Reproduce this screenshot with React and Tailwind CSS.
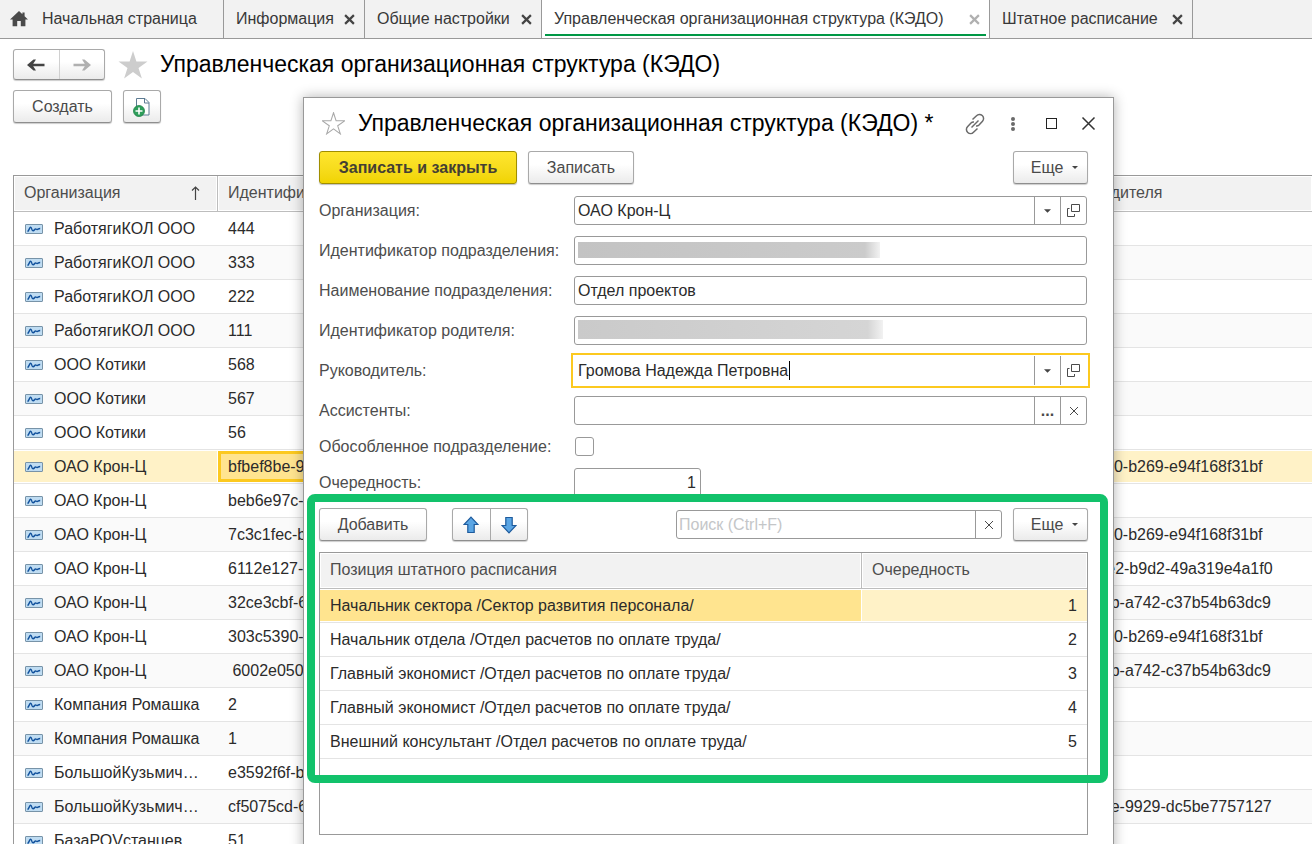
import { useState } from "react";

const TABS = [
    { title: "Информация", width: "w-[141px]" },
    { title: "Общие настройки", width: "w-[177px]" },
    { title: "Управленческая организационная структура (КЭДО)", width: "w-[448px]", active: true },
    { title: "Штатное расписание", width: "w-[203px]" },
];

const DEPARTMENTS = [
    { org: "РаботягиКОЛ ООО", code: "444" },
    { org: "РаботягиКОЛ ООО", code: "333" },
    { org: "РаботягиКОЛ ООО", code: "222" },
    { org: "РаботягиКОЛ ООО", code: "111" },
    { org: "ООО Котики", code: "568" },
    { org: "ООО Котики", code: "567" },
    { org: "ООО Котики", code: "56" },
    { org: "ОАО Крон-Ц", code: "bfbef8be-9", parent: "7e3b2a90-5d1e-11e0-b269-e94f168f31bf", selected: true },
    { org: "ОАО Крон-Ц", code: "beb6e97c-1" },
    { org: "ОАО Крон-Ц", code: "7c3c1fec-b", parent: "7e3b2a90-5d1e-11e0-b269-e94f168f31bf" },
    { org: "ОАО Крон-Ц", code: "6112e127-4", parent: "a0946e12-8b3d-41e2-b9d2-49a319e4a1f0" },
    { org: "ОАО Крон-Ц", code: "32ce3cbf-6", parent: "6002e050-7f1a-4d9b-a742-c37b54b63dc9" },
    { org: "ОАО Крон-Ц", code: "303c5390-2", parent: "7e3b2a90-5d1e-11e0-b269-e94f168f31bf" },
    { org: "ОАО Крон-Ц", code: "\u00a06002e050-7", parent: "6002e050-7f1a-4d9b-a742-c37b54b63dc9" },
    { org: "Компания Ромашка", code: "2" },
    { org: "Компания Ромашка", code: "1" },
    { org: "БольшойКузьмич…", code: "e3592f6f-b" },
    { org: "БольшойКузьмич…", code: "cf5075cd-6", parent: "e3592a6b-b41d-4f8e-9929-dc5be7757127" },
    { org: "БазаРОVстанцев", code: "51" },
];

const POSITIONS = [
    "Начальник сектора /Сектор развития персонала/",
    "Начальник отдела /Отдел расчетов по оплате труда/",
    "Главный экономист /Отдел расчетов по оплате труда/",
    "Главный экономист /Отдел расчетов по оплате труда/",
    "Внешний консультант /Отдел расчетов по оплате труда/",
];

const BUTTON =
    "flex items-center justify-center rounded-[3px] border border-[#a9a9a9] border-b-[#8e8e8e] bg-linear-to-b from-white from-40% to-[#ebebeb] text-[#4a4a4a] shadow-[0_1px_1px_rgba(0,0,0,0.2)]";

/* Icons */

function Cross({ size = 10, width = 2 }) {
    return (
        <svg width={size} height={size} viewBox="0 0 10 10">
            <path d="M1 1 9 9M9 1 1 9" stroke="currentColor" strokeWidth={width} fill="none" />
        </svg>
    );
}

function HomeIcon() {
    return (
        <svg width="18" height="16" viewBox="0 0 18 16" fill="#4a4a4a">
            <path d="M9 0 0 8.6h2.6V15.2h4.6V10h3.6v5.2h4.6V8.6H18L14.6 5.3V1.4h-2.2v1.8z" />
        </svg>
    );
}

function ArrowIcon({ flip, color }) {
    return (
        <svg width="18" height="12" viewBox="0 0 18 12" className={flip ? "rotate-180" : ""}>
            <path d="M0 6 6.5 0.5H9L6.2 4.7H17.5V7.3H6.2L9 11.5H6.5z" fill={color} />
        </svg>
    );
}

function StarIcon({ size, fill, stroke }) {
    return (
        <svg width={size} height={size} viewBox="0 0 30 30">
            <path
                d="M15 1 18.4 11.5H29.5L20.5 18 23.9 28.500 15 22 6.100 28.500 9.500 18 .5 11.500H11.600z"
                fill={fill}
                stroke={stroke}
                strokeWidth="1.4"
            />
        </svg>
    );
}

function NewDocIcon() {
    return (
        <svg width="18" height="20" viewBox="0 0 18 20">
            <path d="M3.5 1.5h8.500l4 4v12.500H3.500z" fill="#fff" stroke="#5d7b92" />
            <path d="M11.5 1.5V6H16" fill="none" stroke="#5d7b92" />
            <circle cx="6" cy="14" r="5.5" fill="#2e9e5b" stroke="#1f8448" strokeWidth="0.8" />
            <path d="M6 10.5v7M2.5 14h7" stroke="#fff" strokeWidth="1.6" />
        </svg>
    );
}

function ItemIcon() {
    return (
        <svg width="18" height="12" viewBox="0 -1.500 18 12" className="shrink-0">
            <rect x="0.5" y="0" width="17" height="9" rx="0.5" fill="#bfdcf2" stroke="#7793a8" />
            <path
                d="M2.5 7C4 6.5 4.500 2.500 5.700 2.700S6.500 6.500 8 6.300 9.500 4.500 10.500 4.500s1 .8 2 .3 1.200-.8 2.700-.8"
                fill="none"
                stroke="#10509c"
                strokeWidth="1.4"
            />
        </svg>
    );
}

function LinkIcon() {
    return (
        <svg width="22" height="22" viewBox="0 0 22 22" fill="none" stroke="#6a6a6a" strokeWidth="1.5">
            <path d="M8.5 6.5 12.5 2.8a3.9 3.9 0 0 1 6 5.5L15 12q-1.200 1.200-3 1" />
            <path d="M13.5 15.5 9.5 19.2a3.9 3.9 0 0 1-6-5.500L7 10q1.200-1.200 3-1" />
            <path d="M7.500 14.500 14.500 7.500" />
        </svg>
    );
}

function MoveIcon({ down }) {
    return (
        <svg width="16" height="18" viewBox="0 0 16 18" className={down ? "rotate-180" : ""}>
            <path d="M8 1.200 15 8.500h-3.800V16.500H4.800V8.500H1z" fill="#5aa5e4" stroke="#1d5a9c" strokeWidth="1.2" />
        </svg>
    );
}

function OpenIcon() {
    return (
        <svg width="13" height="13" viewBox="0 0 13 13" fill="none" stroke="#4a4a4a">
            <path d="M4.5 0.5h8v7h-8zM2.5 4.5h-2v8h7v-2.500" />
        </svg>
    );
}

function Caret({ small }) {
    return (
        <svg width={small ? 6 : 7} height={small ? 3 : 4} viewBox="0 0 8 4" fill="#444">
            <path d="M0 0h8L4 4z" />
        </svg>
    );
}

/* Form */

function Field({ id, label, children }) {
    return (
        <>
            <label htmlFor={id} className="leading-[29px] whitespace-nowrap text-[#4d4d4d]">
                {label}
            </label>
            {children}
        </>
    );
}

function TextBox({ id, value, onChange, focused, actions = [], children }) {
    return (
        <div
            className={`relative mr-px flex h-[29px] bg-white ${
                focused
                    ? "px-px outline-2 outline-offset-1 outline-[#fcc91f]"
                    : "rounded-[3px] border border-[#999]"
            }`}
        >
            <input
                id={id}
                type="text"
                value={value}
                onChange={(e) => onChange && onChange(e.target.value)}
                className="min-w-0 flex-1 bg-transparent px-[3px] text-[#2b2b2b] outline-none"
            />
            {actions.map((a) => (
                <button
                    key={a.label}
                    type="button"
                    aria-label={a.label}
                    className="flex w-[26px] items-center justify-center border-l border-[#999] text-[#4a4a4a]"
                >
                    {a.icon}
                </button>
            ))}
            {children}
        </div>
    );
}

const SELECT_ACTIONS = [
    { label: "Выбрать", icon: <Caret /> },
    { label: "Открыть", icon: <OpenIcon /> },
];

function MoreButton() {
    return (
        <button type="button" className={`${BUTTON} h-[33px] w-[75px] gap-[9px] pl-2`}>
            Еще
            <Caret small />
        </button>
    );
}

function HeaderCell({ children, last }) {
    return (
        <th
            className={`h-9 border-b border-[#bdbdbd] bg-white p-px text-left font-normal text-[#4d4d4d] ${
                last ? "" : "border-r"
            }`}
        >
            <div className="flex h-[33px] items-center justify-between bg-[#f2f2f2] px-[9px] pb-0.5 whitespace-nowrap">
                {children}
            </div>
        </th>
    );
}

function Dialog() {
    const [name, setName] = useState("Отдел проектов");
    const [head, setHead] = useState("Громова Надежда Петровна");
    const [search, setSearch] = useState("");

    return (
        <section
            aria-label="Управленческая организационная структура"
            className="absolute top-[97px] right-[198px] left-[303px] border border-[#999] bg-white pr-[25px] pb-8 pl-[15px] shadow-[0_0_12px_rgba(0,0,0,0.3)]"
        >
            {/* Title */}
            <header className="-mr-2 flex h-[53px] items-center pb-0.5">
                <button type="button" aria-label="В избранное" className="w-[39px] pl-[3px]">
                    <StarIcon size={23} fill="none" stroke="#a8a8a8" />
                </button>
                <h2 className="flex-1 text-[23px] whitespace-nowrap text-black">
                    Управленческая организационная структура (КЭДО) *
                </h2>
                <div className="flex items-center">
                    <button type="button" aria-label="Ссылка" className="mr-6">
                        <LinkIcon />
                    </button>
                    <button type="button" aria-label="Меню" className="mr-[30px]">
                        <svg width="6" height="16" viewBox="0 0 6 16" fill="#6a6a6a">
                            <circle cx="3" cy="3" r="2" />
                            <circle cx="3" cy="8" r="2" />
                            <circle cx="3" cy="13" r="2" />
                        </svg>
                    </button>
                    <button
                        type="button"
                        aria-label="Развернуть"
                        className="mr-6 size-[11px] border border-[#222]"
                    />
                    <button type="button" aria-label="Закрыть" className="text-[#333]">
                        <Cross size={15} width={1} />
                    </button>
                </div>
            </header>

            {/* Commands */}
            <div className="flex gap-[11px]">
                <button
                    type="button"
                    className="h-[33px] w-[198px] rounded-[3px] border border-[#a08e00] bg-linear-to-b from-[#ffe62e] to-[#f0d400] font-bold text-[#443f33] shadow-[0_1px_1px_rgba(0,0,0,0.25)]"
                >
                    Записать и закрыть
                </button>
                <button type="button" className={`${BUTTON} h-[33px] w-[106px]`}>
                    Записать
                </button>
                <div className="ml-auto">
                    <MoreButton />
                </div>
            </div>

            {/* Fields */}
            <div className="mt-3 grid grid-cols-[255px_1fr] gap-y-[11px]">
                <Field id="org" label="Организация:">
                    <TextBox id="org" value="ОАО Крон-Ц" actions={SELECT_ACTIONS} />
                </Field>
                <Field id="dept-id" label="Идентификатор подразделения:">
                    <TextBox id="dept-id" value="">
                        <span className="absolute top-[5px] left-[3px] h-4 w-[302px] bg-linear-to-r from-[#c3c3c3] via-[#cbcbcb] via-95% to-[#f2f2f2]" />
                    </TextBox>
                </Field>
                <Field id="dept-name" label="Наименование подразделения:">
                    <TextBox id="dept-name" value={name} onChange={setName} />
                </Field>
                <Field id="parent-id" label="Идентификатор родителя:">
                    <TextBox id="parent-id" value="">
                        <span className="absolute top-[3px] left-[3px] h-[19px] w-[305px] bg-linear-to-r from-[#cacaca] via-[#d5d5d5] via-95% to-[#f2f2f2]" />
                    </TextBox>
                </Field>
                <Field id="head" label="Руководитель:">
                    <TextBox id="head" value={head} onChange={setHead} actions={SELECT_ACTIONS} focused>
                        <span className="absolute top-[5px] left-[215px] h-[19px] w-px bg-black" />
                    </TextBox>
                </Field>
                <Field id="assistants" label="Ассистенты:">
                    <TextBox
                        id="assistants"
                        value=""
                        actions={[
                            { label: "Подобрать", icon: <b>...</b> },
                            { label: "Очистить", icon: <Cross width={1} /> },
                        ]}
                    />
                </Field>
            </div>
            <div className="mt-[7px] grid grid-cols-[255px_1fr] items-center gap-y-[7px]">
                <Field id="separate" label="Обособленное подразделение:">
                    <input
                        id="separate"
                        type="checkbox"
                        className="ml-px size-[19px] appearance-none rounded-[3px] border border-[#999] bg-white"
                    />
                </Field>
                <Field id="order" label="Очередность:">
                    <input
                        id="order"
                        type="text"
                        defaultValue="1"
                        className="h-[29px] w-[127px] rounded-[3px] border border-[#999] px-1 text-right text-[#2b2b2b]"
                    />
                </Field>
            </div>

            {/* Staff positions */}
            <div className="relative mt-[11px]">
                <div className="flex items-center">
                    <button type="button" className={`${BUTTON} h-[33px] w-[108px]`}>
                        Добавить
                    </button>
                    <div className={`${BUTTON} ml-[25px] h-[33px] w-[76px]`}>
                        <button
                            type="button"
                            aria-label="Вверх"
                            className="flex h-full flex-1 items-center justify-center border-r border-[#a9a9a9]"
                        >
                            <MoveIcon />
                        </button>
                        <button
                            type="button"
                            aria-label="Вниз"
                            className="flex h-full flex-1 items-center justify-center"
                        >
                            <MoveIcon down />
                        </button>
                    </div>
                    <div className="mr-[11px] ml-auto flex h-[29px] w-[326px] rounded-[3px] border border-[#999]">
                        <input
                            type="text"
                            aria-label="Поиск"
                            placeholder="Поиск (Ctrl+F)"
                            value={search}
                            onChange={(e) => setSearch(e.target.value)}
                            className="min-w-0 flex-1 px-0.5 outline-none placeholder:text-[#c4c6c8]"
                        />
                        <button
                            type="button"
                            aria-label="Очистить поиск"
                            onClick={() => setSearch("")}
                            className="flex w-[26px] items-center justify-center border-l border-[#999] text-[#4a4a4a]"
                        >
                            <Cross width={1} />
                        </button>
                    </div>
                    <MoreButton />
                </div>

                <div className="mt-[11px] h-[283px] border border-[#999]">
                    <table className="w-full table-fixed border-separate border-spacing-0 text-[#2b2b2b]">
                        <colgroup>
                            <col />
                            <col className="w-[225px]" />
                        </colgroup>
                        <thead>
                            <tr>
                                <HeaderCell>Позиция штатного расписания</HeaderCell>
                                <HeaderCell last>Очередность</HeaderCell>
                            </tr>
                        </thead>
                        <tbody>
                            {POSITIONS.map((position, index) => (
                                <tr key={index}>
                                    <td className="border-b border-[#e4e4e4] py-px pr-px">
                                        <div
                                            className={`h-[31px] truncate px-[10px] leading-[31px] ${
                                                index === 0 ? "bg-[#ffe48f]" : ""
                                            }`}
                                        >
                                            {position}
                                        </div>
                                    </td>
                                    <td className="border-b border-[#e4e4e4] py-px">
                                        <div
                                            className={`h-[31px] px-[10px] text-right leading-[31px] ${
                                                index === 0 ? "bg-[#fff2c7]" : ""
                                            }`}
                                        >
                                            {index + 1}
                                        </div>
                                    </td>
                                </tr>
                            ))}
                        </tbody>
                    </table>
                </div>

                {/* Highlight frame */}
                <div className="pointer-events-none absolute -top-[14px] -right-5 -left-3 h-[289px] rounded-lg border-8 border-[#12c26b]" />
            </div>
        </section>
    );
}

export default function App() {
    return (
        <div className="relative h-screen overflow-hidden bg-white font-['Liberation_Sans',Arial,sans-serif] text-base">
            {/* Tabs */}
            <nav className="flex h-[39px] border-b border-[#999] bg-[#f2f2f2] text-[#383838]">
                <a
                    href="#home"
                    className="flex w-56 items-center gap-[14px] border-r border-[#999] pl-[10px] whitespace-nowrap"
                >
                    <HomeIcon />
                    Начальная страница
                </a>
                {TABS.map((tab) => (
                    <div
                        key={tab.title}
                        className={`relative flex items-center justify-between border-r border-[#999] pr-[9px] pl-3 whitespace-nowrap ${
                            tab.width
                        } ${tab.active ? "bg-white" : ""}`}
                    >
                        <a href="#tab">{tab.title}</a>
                        <button
                            type="button"
                            aria-label="Закрыть вкладку"
                            className={tab.active ? "text-[#b0b0b0]" : "text-[#444]"}
                        >
                            <Cross size={11} width={2} />
                        </button>
                        {tab.active && (
                            <span className="absolute right-[3px] bottom-[2px] left-[3px] h-0.5 bg-[#009846]" />
                        )}
                    </div>
                ))}
            </nav>

            {/* Page header */}
            <div className="mt-[10px] flex h-[31px] items-center pl-[13px]">
                <div className={`${BUTTON} h-[31px] w-[92px]`}>
                    <button
                        type="button"
                        aria-label="Назад"
                        className="flex h-full flex-1 items-center justify-center border-r border-[#d0d0d0]"
                    >
                        <ArrowIcon color="#444" />
                    </button>
                    <button
                        type="button"
                        aria-label="Вперед"
                        className="flex h-full flex-1 items-center justify-center"
                    >
                        <ArrowIcon color="#b0b0b0" flip />
                    </button>
                </div>
                <button type="button" aria-label="В избранное" className="mr-3 ml-[13px]">
                    <StarIcon size={30} fill="#cdcdcd" stroke="none" />
                </button>
                <h1 className="text-[23px] whitespace-nowrap text-black">
                    Управленческая организационная структура (КЭДО)
                </h1>
            </div>

            <div className="mt-[10px] flex gap-[11px] pl-[13px]">
                <button type="button" className={`${BUTTON} h-[33px] w-[99px]`}>
                    Создать
                </button>
                <button type="button" aria-label="Создать копированием" className={`${BUTTON} h-[33px] w-[38px]`}>
                    <NewDocIcon />
                </button>
            </div>

            {/* Departments */}
            <div className="mt-[52px] ml-[13px] border-t border-l border-[#999]">
                <table className="w-full table-fixed border-separate border-spacing-0 text-[#2b2b2b]">
                    <colgroup>
                        <col className="w-[204px]" />
                        <col className="w-[743px]" />
                        <col />
                    </colgroup>
                    <thead>
                        <tr>
                            <HeaderCell>
                                Организация
                                <svg width="9" height="14" viewBox="0 0 9 14" className="mr-[7px]">
                                    <path d="M4.5 14V1M1 4.5 4.5 1 8 4.5" fill="none" stroke="#444" strokeWidth="1.2" />
                                </svg>
                            </HeaderCell>
                            <HeaderCell>Идентификатор</HeaderCell>
                            <HeaderCell last>Идентификатор родителя</HeaderCell>
                        </tr>
                    </thead>
                    <tbody>
                        {DEPARTMENTS.map((row, index) => (
                            <tr key={index} className={index % 2 === 1 && !row.selected ? "bg-[#fafafa]" : ""}>
                                <td className="border-b border-[#e4e4e4] py-px pr-px">
                                    <div
                                        className={`flex h-[31px] items-center gap-[11px] pr-1 pl-[11px] ${
                                            row.selected ? "bg-[#fff2c7]" : ""
                                        }`}
                                    >
                                        <ItemIcon />
                                        <span className="whitespace-nowrap">{row.org}</span>
                                    </div>
                                </td>
                                <td className="border-b border-[#e4e4e4] py-px">
                                    <div
                                        className={`flex h-[31px] items-center ${
                                            row.selected
                                                ? "border-3 border-[#fcc91f] bg-[#ffe48f] px-[7px]"
                                                : "px-[10px]"
                                        }`}
                                    >
                                        {row.code}
                                    </div>
                                </td>
                                <td className="border-b border-[#e4e4e4] py-px">
                                    <div
                                        className={`flex h-[31px] items-center px-[10px] whitespace-nowrap ${
                                            row.selected ? "bg-[#fff2c7]" : ""
                                        }`}
                                    >
                                        {row.parent}
                                    </div>
                                </td>
                            </tr>
                        ))}
                    </tbody>
                </table>
            </div>

            <Dialog />
        </div>
    );
}
